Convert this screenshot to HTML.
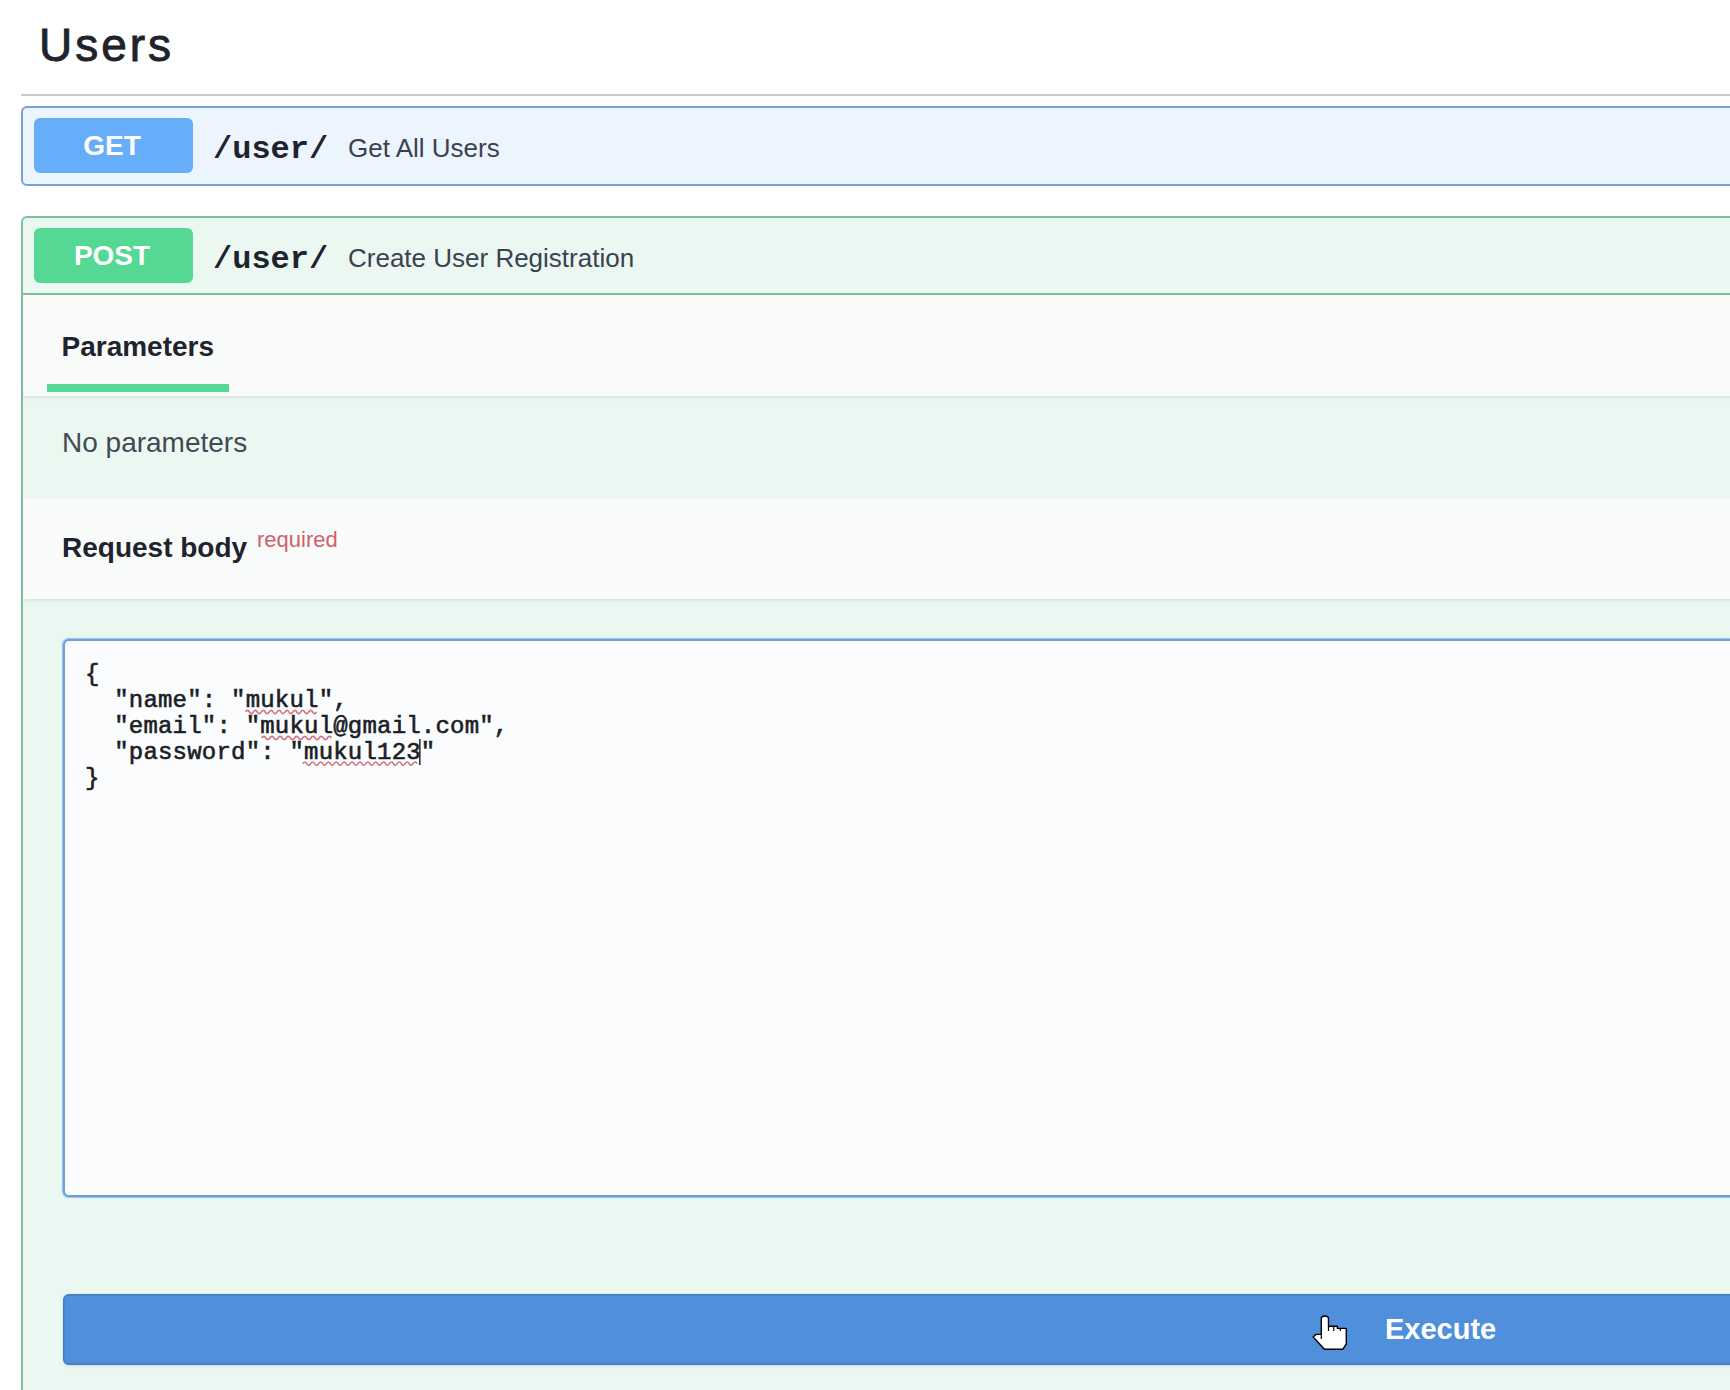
<!DOCTYPE html>
<html><head><meta charset="utf-8">
<style>
html,body{margin:0;padding:0;width:1730px;height:1390px;overflow:hidden;background:#fff;}
body{position:relative;font-family:"Liberation Sans",sans-serif;color:#3b4151;}
.abs{position:absolute;}
#tag{left:39px;top:15px;font-size:46px;line-height:60px;letter-spacing:3.0px;color:#20232c;-webkit-text-stroke:0.9px #20232c;white-space:nowrap;}
#tagline{left:21px;top:94px;width:1800px;height:2px;background:#c7c9cd;}
.opblock{position:absolute;left:21px;width:1800px;border:2px solid;border-radius:6px;box-sizing:border-box;}
#get{top:106px;height:80px;background:#ecf4fd;border-color:#7ba2d2;}
#post{top:216px;height:1300px;background:#ebf8f2;border-color:#7cc09c;}
.badge{position:absolute;left:11px;top:10px;width:159px;height:55px;box-sizing:border-box;padding-right:3px;border-radius:6px;color:#fff;font-weight:bold;font-size:28px;text-align:center;line-height:56px;}
#get .badge{background:#66aefa;}
#post .badge{background:#55d894;}
.path{position:absolute;left:190px;top:14px;height:55px;line-height:55px;font-family:"Liberation Mono",monospace;font-weight:bold;font-size:32px;color:#1f232d;}
.desc{position:absolute;left:325px;top:13px;height:55px;line-height:55px;font-size:26px;color:#3b4151;}
#sumline{left:0;top:75px;width:1800px;height:2px;background:#7cc09c;}
#tabhdr{left:0;top:77px;width:1800px;height:101px;background:#f9fbfb;box-shadow:0 2px 3px rgba(0,0,0,.08);}
#tabtext{left:38.5px;top:113px;font-size:28px;font-weight:bold;color:#1f232d;}
#tabul{left:24px;top:166px;width:182px;height:8px;background:#55d894;}
#nopar{left:39px;top:209px;font-size:28px;color:#434854;}
#rbhdr{left:0;top:280px;width:1800px;height:101px;background:#f9fbfb;box-shadow:0 2px 3px rgba(0,0,0,.08);}
#rbtext{left:39px;top:314px;font-size:28px;font-weight:bold;color:#1f232d;}
#req{left:234px;top:309px;font-size:22px;color:#d0606e;}
#ta{left:40px;top:421px;width:1800px;height:558px;border:2px solid #6aa0dc;box-shadow:0 0 1px 0.5px rgba(90,150,220,.55);border-radius:6px;background:#fafcfd;box-sizing:border-box;}
#code{left:62px;top:444px;font-family:"Liberation Mono",monospace;font-size:24px;letter-spacing:0.2px;line-height:26px;color:#1b1e25;white-space:pre;font-weight:normal;-webkit-text-stroke:0.6px #1b1e25;}
.sq{text-decoration:underline wavy #e05050;text-decoration-thickness:1px;text-underline-offset:4px;}
#exec{left:40px;top:1076px;width:2754px;height:71px;border-radius:6px;background:#4f8fdc;box-shadow:inset 0 0 0 1.5px rgba(50,100,170,.45),0 1px 3px rgba(0,0,0,.12);}
#exectext{left:1362px;top:1095px;font-size:29px;font-weight:bold;color:#fff;}
</style></head>
<body>
<div id="tag" class="abs">Users</div>
<div id="tagline" class="abs"></div>
<div id="get" class="opblock">
  <div class="badge">GET</div>
  <div class="path">/user/</div>
  <div class="desc">Get All Users</div>
</div>
<div id="post" class="opblock">
  <div class="badge">POST</div>
  <div class="path">/user/</div>
  <div class="desc">Create User Registration</div>
  <div id="sumline" class="abs"></div>
  <div id="tabhdr" class="abs"></div>
  <div id="tabtext" class="abs">Parameters</div>
  <div id="tabul" class="abs"></div>
  <div id="nopar" class="abs">No parameters</div>
  <div id="rbhdr" class="abs"></div>
  <div id="rbtext" class="abs">Request body</div>
  <div id="req" class="abs">required</div>
  <div id="ta" class="abs"></div>
  <div id="code" class="abs">{
  "name": "mukul",
  "email": "mukul@gmail.com",
  "password": "mukul123"
}</div>
  <div id="exec" class="abs"></div>
  <div id="exectext" class="abs">Execute</div>
</div>
<svg class="abs" style="left:0;top:0;" width="1730" height="1390" viewBox="0 0 1730 1390"><path d="M245.5 712.0 Q247.5 708.8 249.4 712.0 T253.4 712.0 T257.3 712.0 T261.3 712.0 T265.2 712.0 T269.2 712.0 T273.1 712.0 T277.1 712.0 T281.0 712.0 T284.9 712.0 T288.9 712.0 T292.8 712.0 T296.8 712.0 T300.7 712.0 T304.7 712.0 T308.6 712.0 T312.6 712.0 T316.5 712.0" fill="none" stroke="#d27580" stroke-width="1.6"/><path d="M261.6 738.0 Q263.7 734.8 265.7 738.0 T269.8 738.0 T273.9 738.0 T278.0 738.0 T282.2 738.0 T286.3 738.0 T290.4 738.0 T294.5 738.0 T298.6 738.0 T302.7 738.0 T306.8 738.0 T310.9 738.0 T315.1 738.0 T319.2 738.0 T323.3 738.0 T327.4 738.0 T331.5 738.0" fill="none" stroke="#d27580" stroke-width="1.6"/><path d="M302.8 763.6 Q304.8 760.4 306.7 763.6 T310.7 763.6 T314.6 763.6 T318.6 763.6 T322.5 763.6 T326.4 763.6 T330.4 763.6 T334.3 763.6 T338.2 763.6 T342.2 763.6 T346.1 763.6 T350.1 763.6 T354.0 763.6 T357.9 763.6 T361.9 763.6 T365.8 763.6 T369.7 763.6 T373.7 763.6 T377.6 763.6 T381.6 763.6 T385.5 763.6 T389.4 763.6 T393.4 763.6 T397.3 763.6 T401.2 763.6 T405.2 763.6 T409.1 763.6 T413.1 763.6 T417.0 763.6" fill="none" stroke="#d27580" stroke-width="1.6"/><rect x="419" y="739" width="1.6" height="26" fill="#333"/></svg>
<svg class="abs" style="left:1305px;top:1305px;" width="50" height="50" viewBox="0 0 50 50">
<path d="M16.3 29.2 L16.3 14 Q16.3 11 19.9 11 Q23.5 11 23.5 14 L23.5 21.3 L32.4 21.3 L32.4 23.4 L41.3 23.4 L41.3 38.8 L37.9 44.2 L19.4 44.2 L8.2 32 L10.8 29.4 Z" fill="#fff" stroke="#000" stroke-width="1.4" stroke-linejoin="round"/>
<path d="M23.5 21.5 L23.5 26 M28.8 21.6 L28.8 25.9 M35.3 23.5 L35.3 25.9 M16.3 29 L16.3 34" stroke="#000" stroke-width="1.2"/>
</svg>
</body></html>
